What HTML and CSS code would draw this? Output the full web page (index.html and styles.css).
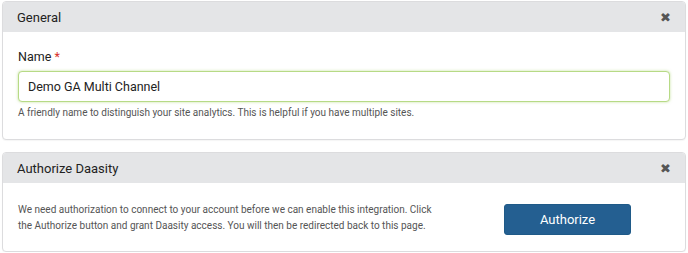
FILE: index.html
```html
<!DOCTYPE html>
<html lang="en">
<head>
  <meta charset="UTF-8" />
  <title>Integration Settings</title>
  <link rel="stylesheet" href="styles.css">
</head>
<body>
  <div class="panel">
    <div class="panel-head">
      <span>General</span>
      <span class="close">&#10006;</span>
    </div>
    <div class="panel-body">
      <label class="field-label" for="name">Name <span class="req">*</span></label>
      <input class="field-input" id="name" type="text" value="Demo GA Multi Channel">
      <div class="help">A friendly name to distinguish your site analytics. This is helpful if you have multiple sites.</div>
    </div>
  </div>

  <div class="panel">
    <div class="panel-head">
      <span>Authorize Daasity</span>
      <span class="close">&#10006;</span>
    </div>
    <div class="panel-body auth-row">
      <p class="auth-text">We need authorization to connect to your account before we can enable this integration. Click the Authorize button and grant Daasity access. You will then be redirected back to this page.</p>
      <button class="btn-primary">Authorize</button>
    </div>
  </div>
</body>
</html>
```

FILE: styles.css
```css
body {
  margin: 0;
  padding: 1px 2px 0 2px;
  background: #fff;
  color: #333;
  font-family: Roboto, 'Liberation Sans', sans-serif;
}

.panel {
  border: 1px solid #dcdcde;
  border-radius: 4px;
  margin-bottom: 12px;
  background: #fff;
  box-shadow: 0 1px 1px rgba(0, 0, 0, 0.04);
}

.panel:last-child {
  margin-bottom: 0;
}

.panel-head {
  display: flex;
  justify-content: space-between;
  align-items: center;
  height: 30px;
  padding: 0 14px 0 14px;
  background: #e4e5e7;
  border-radius: 3px 3px 0 0;
  font-size: 13px;
  color: #222;
}

.close {
  font-size: 13px;
  color: #555;
  font-family: 'DejaVu Sans', sans-serif;
}

.panel-body {
  padding: 17px 15px 20px 15px;
}

.field-label {
  display: block;
  font-size: 12.5px;
  line-height: 16px;
  color: #222;
  margin-bottom: 6px;
}

.req {
  color: #d9322b;
}

.field-input {
  display: block;
  box-sizing: border-box;
  width: 100%;
  height: 31px;
  padding: 0 9px;
  border: 1px solid #b7da86;
  border-radius: 4px;
  box-shadow: 0 0 3px rgba(150, 200, 80, 0.55);
  font-family: inherit;
  font-size: 12.5px;
  color: #222;
  outline: none;
}

.help {
  margin-top: 4px;
  font-size: 10px;
  line-height: 13px;
  color: #555;
}

.auth-row {
  display: flex;
  align-items: center;
  padding: 17px 54px 16px 15px;
}

.auth-text {
  margin: 0;
  flex: 1;
  max-width: 425px;
  font-size: 10px;
  line-height: 16px;
  color: #555;
}

.btn-primary {
  margin-left: auto;
  margin-top: 4px;
  width: 127px;
  height: 31px;
  border: 1px solid #1f5a88;
  border-radius: 3px;
  background: #245f91;
  color: #fff;
  font-family: inherit;
  font-size: 13px;
  cursor: pointer;
}
```
